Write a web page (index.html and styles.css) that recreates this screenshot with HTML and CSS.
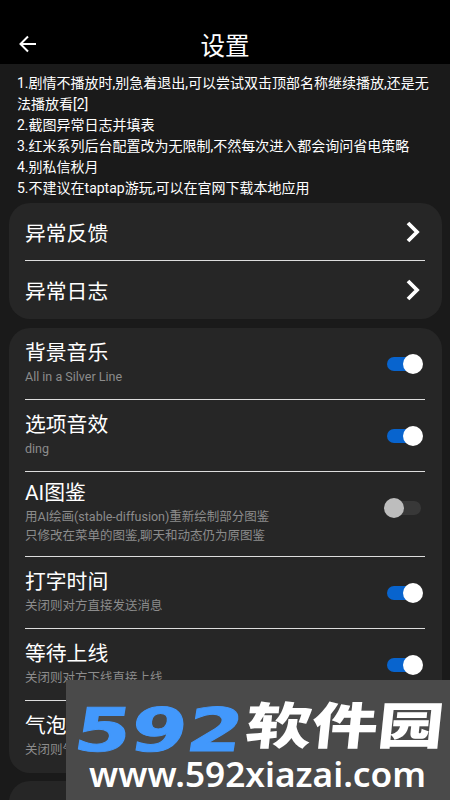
FILE: index.html
```html
<!DOCTYPE html>
<html lang="zh-CN">
<head>
<meta charset="utf-8">
<title>设置</title>
<link rel="stylesheet" href="styles.css">
</head>
<body>
<div class="screen">
  <header class="bar">
    <svg class="back" viewBox="0 0 18 18"><path d="M17 9H2M9 1.5 1.5 9 9 16.5"/></svg>
    <h1>设置</h1>
  </header>
  <div class="notice">
    <p>1.剧情不播放时,别急着退出,可以尝试双击顶部名称继续播放,还是无<br>法播放看[2]</p>
    <p>2.截图异常日志并填表</p>
    <p>3.红米系列后台配置改为无限制,不然每次进入都会询问省电策略</p>
    <p>4.别私信秋月</p>
    <p>5.不建议在taptap游玩,可以在官网下载本地应用</p>
  </div>
  <section class="panel links">
    <div class="row link"><h2>异常反馈</h2><svg class="chev" viewBox="0 0 14 22"><path d="M2 2l9 9-9 9"/></svg></div>
    <div class="row link"><h2>异常日志</h2><svg class="chev" viewBox="0 0 14 22"><path d="M2 2l9 9-9 9"/></svg></div>
  </section>
  <section class="panel options">
    <div class="row"><div class="label"><h2>背景音乐</h2><p>All in a Silver Line</p></div><span class="switch on"></span></div>
    <div class="row"><div class="label"><h2>选项音效</h2><p>ding</p></div><span class="switch on"></span></div>
    <div class="row tall"><div class="label"><h2>AI图鉴</h2><p>用AI绘画(stable-diffusion)重新绘制部分图鉴<br>只修改在菜单的图鉴,聊天和动态仍为原图鉴</p></div><span class="switch"></span></div>
    <div class="row"><div class="label"><h2>打字时间</h2><p>关闭则对方直接发送消息</p></div><span class="switch on"></span></div>
    <div class="row"><div class="label"><h2>等待上线</h2><p>关闭则对方下线直接上线</p></div><span class="switch on"></span></div>
    <div class="row"><div class="label"><h2>气泡</h2><p>关闭则气</p></div></div>
  </section>
  <section class="panel next"></section>
  <svg class="brand" viewBox="0 0 384 120">
    <g transform="translate(6 70.5) skewX(-9)"><text class="num" textLength="168" lengthAdjust="spacingAndGlyphs">592</text></g>
    <g transform="translate(178 63.5) skewX(-6)"><text class="name" textLength="198" lengthAdjust="spacingAndGlyphs">软件园</text></g>
    <text class="url" x="23" y="107" textLength="337" lengthAdjust="spacingAndGlyphs">www.592xiazai.com</text>
  </svg>
</div>
</body>
</html>
```

FILE: styles.css
```css
* { box-sizing: border-box; margin: 0; padding: 0; }
body { background: #1a1a1a; overflow: hidden; }
.screen {
  position: relative;
  width: 450px;
  height: 800px;
  overflow: hidden;
  background: #1a1a1a;
  color: #fff;
  font-family: Roboto, "Noto Sans CJK SC", sans-serif;
}
.bar {
  display: grid;
  grid-template-columns: 60px 1fr 60px;
  align-items: center;
  height: 64px;
  padding-top: 24px;
  background: #000;
}
.back { width: 18px; height: 18px; margin-left: 19px; fill: none; stroke: #fff; stroke-width: 2; }
h1 { padding-top: 6px; font-size: 24.6px; line-height: 34px; font-weight: 400; text-align: center; }
.notice { height: 139px; padding: 9px 0 0 17px; font-size: 14px; line-height: 21px; white-space: nowrap; }
.panel { margin: 0 8.5px 8px; padding: 0 16.5px; border-radius: 21px; background: #262626; }
.links { height: 116px; margin-bottom: 9px; }
.options { height: 445px; }
.next { height: 80px; }
.row { display: flex; justify-content: space-between; height: 72px; border-bottom: 1px solid #ddd; }
.row:last-child { border-bottom: 0; }
h2 { font-size: 20.8px; line-height: 30px; font-weight: 400; }
.link { height: 58px; align-items: center; }
.link h2 { padding-top: 4px; }
.link:last-child h2 { padding-top: 3px; }
.chev { width: 14px; height: 22px; margin-right: 5px; fill: none; stroke: #fff; stroke-width: 3.8; }
.label { padding-top: 10px; }
.label p { margin-top: -1px; color: #8c8c8c; font-size: 12.5px; line-height: 19px; white-space: nowrap; }
.tall { height: 85px; }
.tall .label { padding-top: 6px; }
.switch { position: relative; width: 34px; height: 14px; margin: 29px 4px 0 0; border-radius: 7px; background: #383838; }
.switch::after { content: ""; position: absolute; top: -3px; left: -3px; width: 20px; height: 20px; border-radius: 50%; background: #bdbdbd; }
.on { background: #0864ce; }
.on::after { left: 16px; background: #fff; }
.brand { position: absolute; left: 66px; top: 680px; width: 384px; height: 120px; background: #4a4a4a; }
.num { font: 700 60px "DejaVu Sans", sans-serif; fill: #4298fc; stroke: #4298fc; stroke-width: 1; }
.name { font: 900 50px "Noto Sans CJK SC", sans-serif; fill: #fff; }
.url { font: 600 34px "Noto Sans", sans-serif; fill: #fff; }
```
